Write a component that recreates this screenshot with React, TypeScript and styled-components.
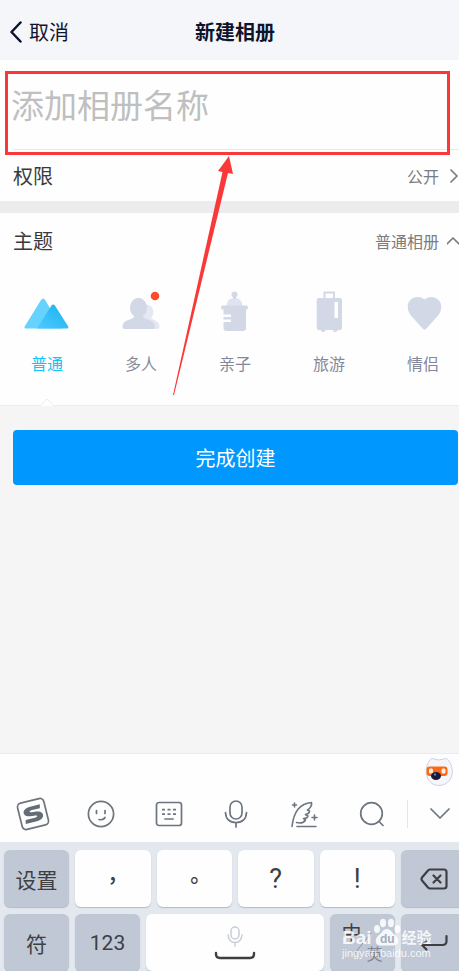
import React from "react";
import styled, { createGlobalStyle } from "styled-components";

const Global = createGlobalStyle`
  * { box-sizing: border-box; }
  body {
    margin: 0;
    background: #f5f5f5;
    font-family: "Noto Sans CJK SC", sans-serif;
  }
  button, input { font-family: inherit; }
`;

const Viewport = styled.div`
  min-height: 100vh;
  overflow: hidden;
  display: flex;
`;

const Screen = styled.div`
  position: relative;
  flex: none;
  width: calc(100% + 11px);
  min-height: 100vh;
  display: flex;
  flex-direction: column;
  background: #f5f5f5;
`;

const PlainButton = styled.button`
  border: 0;
  padding: 0;
  background: none;
  color: inherit;
  display: flex;
  align-items: center;
`;

const Header = styled.header`
  display: grid;
  grid-template-columns: 1fr auto 1fr;
  align-items: center;
  height: 60px;
  padding: 4px 10px 0;
  background: #f4f6fa;
  color: #10142a;
`;

const BackButton = styled(PlainButton)`
  gap: 7px;
  font-size: 20px;
  line-height: 28px;
`;

const Title = styled.h1`
  margin: 0;
  font-size: 20px;
  line-height: 28px;
  font-weight: 700;
`;

const Panel = styled.section`
  background: #fefefe;
`;

const NameField = styled.div`
  position: relative;
  height: 90px;
  padding: 20px 11px 0;
`;

const NameInput = styled.input`
  display: block;
  width: 100%;
  height: 48px;
  padding: 0;
  border: 0;
  outline: 0;
  background: transparent;
  font-size: 33px;
  color: #33363c;
  &::placeholder { color: #bfbfbf; opacity: 1; }
`;

const Rule = styled.hr`
  margin: 21px -11px 0 2px;
  border: 0;
  height: 1px;
  background: #e8e8e8;
`;

const Highlight = styled.div`
  position: absolute;
  inset: 11px 20px -5px 5px;
  border: 3px solid #fb3838;
  pointer-events: none;
`;

const Arrow = styled.svg`
  position: absolute;
  left: 172px;
  top: 155px;
  pointer-events: none;
`;

const SettingRow = styled(PlainButton)<{ $tall?: boolean }>`
  width: 100%;
  height: ${(p) => (p.$tall ? 55 : 51)}px;
  padding: 0 11px 0 13px;
  justify-content: space-between;
`;

const SettingLabel = styled.span`
  font-size: 20px;
  line-height: 28px;
  color: #3a3a3c;
`;

const SettingValue = styled.span`
  display: flex;
  align-items: center;
  gap: 8px;
  font-size: 16px;
  line-height: 24px;
  color: #7c7c7e;
`;

const Band = styled.div`
  height: 12px;
  background: #ebeceb;
`;

const Themes = styled.div`
  display: grid;
  grid-template-columns: repeat(5, 1fr);
  height: 138px;
  padding-top: 22px;
  border-bottom: 1px solid #ededed;
`;

const Theme = styled(PlainButton)<{ $active?: boolean }>`
  position: relative;
  flex-direction: column;
  gap: 15px;
  font-size: 16px;
  line-height: 24px;
  color: ${(p) => (p.$active ? "#14c3f8" : "#85889a")};
`;

const ThemePointer = styled.svg`
  position: absolute;
  bottom: -1px;
  left: 50%;
  margin-left: -8px;
`;

const Submit = styled.button`
  height: 55px;
  margin: 24px 12px 0 13px;
  border: 0;
  border-radius: 4px;
  background: #0098ff;
  color: #fff;
  font-size: 20px;
  line-height: 28px;
`;

const Keyboard = styled.section`
  position: relative;
  margin-top: auto;
`;

const InputTools = styled.div`
  height: 89px;
  background: #fefefe;
  border-top: 1px solid #ececec;
`;

const Mascot = styled(PlainButton)`
  margin: 2px 17px 0 auto;
`;

const ToolRow = styled.div`
  display: flex;
  align-items: center;
  justify-content: space-between;
  padding: 4px 8px 0 11px;
  color: #6d757e;
`;

const Tool = styled(PlainButton)<{ $divided?: boolean }>`
  position: relative;
  justify-content: center;
  width: 44px;
  height: 44px;
  ${(p) =>
    p.$divided &&
    `&::before {
      content: "";
      position: absolute;
      left: -11px;
      top: 8px;
      height: 28px;
      border-left: 1px solid #e4e5e8;
    }`}
`;

const Keys = styled.div`
  display: grid;
  gap: 7px;
  padding: 8px 4px 0;
  background: #e3e7ee;
`;

const KeyRow = styled.div<{ $columns: string }>`
  display: grid;
  grid-template-columns: ${(p) => p.$columns};
  gap: 6px;
`;

const Key = styled(PlainButton)<{ $dark?: boolean }>`
  justify-content: center;
  height: 57px;
  border-radius: 6px;
  background: ${(p) => (p.$dark ? "#c0c8d6" : "#fefefe")};
  box-shadow: 0 1px 1px #b3bac6;
  color: #3d3f42;
  font-size: 21px;
  line-height: 30px;
`;

const PunctuationKey = styled(Key)`
  font-family: "Noto Sans CJK TC", sans-serif;
  font-weight: 500;
`;

const LatinKey = styled(Key)<{ $large?: boolean }>`
  font-family: Roboto, sans-serif;
  font-size: ${(p) => (p.$large ? 27 : 21)}px;
`;

const Language = styled.span`
  display: grid;
  grid-template: 21px 21px / 20px 18px;
  column-gap: 4px;
  font-size: 20px;
  line-height: 21px;
  svg { grid-area: 1 / 1 / 3 / 3; place-self: center; }
  small { grid-area: 2 / 2; font-size: 16px; color: #7f8794; }
`;

const LanguageMain = styled.span`
  grid-area: 1 / 1;
`;

const Watermark = styled.div`
  position: absolute;
  left: 342px;
  bottom: 13px;
  color: rgba(255, 255, 255, 0.85);
  font-family: "Liberation Sans", "Noto Sans CJK SC", sans-serif;
  font-size: 11px;
  line-height: 10px;
  pointer-events: none;
`;

const Brand = styled.div`
  display: flex;
  align-items: flex-end;
  gap: 1px;
  font-size: 19px;
  line-height: 20px;
  font-weight: 700;
  svg { margin-bottom: 2px; }
`;

const BrandSuffix = styled.span`
  font-size: 15px;
`;

const stroke = {
  fill: "none",
  stroke: "currentColor",
  strokeLinecap: "round" as const,
  strokeLinejoin: "round" as const,
};

const BackIcon = () => (
  <svg width="12" height="22" viewBox="0 0 12 22" {...stroke} strokeWidth="2.5">
    <path d="M10.500 1.500 1.500 11l9 9.500" />
  </svg>
);

const MountainIcon = () => (
  <svg width="46" height="46" viewBox="0 0 46 46">
    <defs>
      <linearGradient id="peak" x1="0" y1="1" x2="1" y2="0">
        <stop offset="0" stopColor="#50c9fb" />
        <stop offset="1" stopColor="#16b2f2" />
      </linearGradient>
    </defs>
    <path d="M.7 36.500 17 10q2-3 4.200 0L38 38.500H1.500q-1.500 0-.8-2z" fill="#66d2fe" />
    <path d="M13 38.500 27.500 15.500q1.700-2 3.400 0l13.300 21q.8 2-1 2z" fill="url(#peak)" />
  </svg>
);

const PeopleIcon = () => (
  <svg width="46" height="46" viewBox="0 0 46 46">
    <ellipse cx="28.500" cy="22" rx="7" ry="7.500" fill="#e5e8f3" />
    <path d="M28 28h5c4 3 8.500 3 8.500 9q0 2-2 2H28z" fill="#e5e8f3" />
    <ellipse cx="20.500" cy="17.800" rx="8.500" ry="10" fill="#d2d8e6" />
    <path
      d="M16 25h9v2c2 3.500 12 2 12 10q0 2-2 2H6.500q-2 0-2-2c0-8 9.500-6.500 11.500-10z"
      fill="#d2d8e6"
    />
    <circle cx="37" cy="6" r="4.300" fill="#fb4b2d" />
  </svg>
);

const BottleIcon = () => (
  <svg width="46" height="46" viewBox="0 0 46 46">
    <path d="M14.500 17c0-6 3-9 8-9s8 3 8 9z" fill="#dfe4f0" />
    <circle cx="22.500" cy="4.500" r="3" fill="#d2d8e6" />
    <path d="M21 6h3v3h-3z" fill="#d2d8e6" />
    <path
      d="M10.500 15.500h24q1.500 0 1.500 2t-1.500 2H34V38q0 3-3 3H14.500q-3 0-3-3v-6H19v-2.500h-7.500V27H19v-2.500h-7.500v-5h-1q-1.500 0-1.500-2t1.500-2z"
      fill="#d2d8e6"
    />
  </svg>
);

const SuitcaseIcon = () => (
  <svg width="46" height="46" viewBox="0 0 46 46">
    <path d="M18.500 9V2.500h9.500V9" fill="none" stroke="#d2d8e6" strokeWidth="2" />
    <path
      d="M12.700 8h21.300q2 0 2 2v28q0 2-2 2h-2.500q0 2-2.300 2t-2.300-2h-7.500q0 2-2.300 2t-2.300-2h-2.100q-2 0-2-2V10q0-2 2-2z"
      fill="#d2d8e6"
    />
    <rect x="28.500" y="12" width="3.500" height="16" fill="#fefefe" />
  </svg>
);

const HeartIcon = () => (
  <svg width="46" height="46" viewBox="0 0 46 46">
    <path
      d="M24.500 9.500C31 4 41.300 8 41.300 17c0 4-1.800 7-4.300 9.800L26 39q-1.500 1.500-3 0L12 26.800C9.500 24 7.700 21 7.700 17c0-9 10.300-13 16.800-7.500z"
      fill="#d2d8e6"
    />
  </svg>
);

const SogouIcon = () => (
  <svg width="36" height="36" viewBox="0 0 36 36" {...stroke} strokeWidth="1.700">
    <g transform="rotate(-14 18 18)">
      <rect x="4.500" y="4.500" width="27" height="27" rx="4" />
      <path
        d="M27 10.200H17c-10 0-10 8.500-2 9.300l5 .5c2.500.3 2 2-1 2H9.500l-1 4H20c9.500 0 10-8.800 2-9.500l-5-.5c-2.500-.3-2-2 1-2h8z"
        fill="#646c75"
        stroke="none"
      />
    </g>
  </svg>
);

const FaceIcon = () => (
  <svg width="28" height="28" viewBox="0 0 28 28" {...stroke} strokeWidth="1.700">
    <circle cx="14" cy="14" r="12.600" />
    <path d="M9.500 10.500v3M18 10.500v3M12 19.500q4.500 1 6-2" />
  </svg>
);

const KeyboardIcon = () => (
  <svg width="28" height="28" viewBox="0 0 28 28" {...stroke} strokeWidth="1.700">
    <rect x="1.500" y="2.500" width="25" height="23" rx="2.500" />
    <path d="M10 19h8" />
    <path
      strokeLinecap="butt"
      d="M7 9.700h3M12.500 9.700h3M18 9.700h3M7 14.200h3M12.500 14.200h3M18 14.200h3"
    />
  </svg>
);

const MicIcon = () => (
  <svg width="24" height="28" viewBox="0 0 24 28" {...stroke} strokeWidth="1.700">
    <rect x="6" y="1" width="12" height="18" rx="6" />
    <path d="M1.500 12.500q.5 10 10.500 10t10.500-10M12 22.500V27" />
  </svg>
);

const QuillIcon = () => (
  <svg width="28" height="28" viewBox="0 0 28 28" {...stroke} strokeWidth="1.600">
    <path d="M2 26.500C3.500 13 9 3.500 21.500 2.500c.5 3-1 5.500-4 7.500l2 1c0 2-2 3-4 3.500l2.500 1.500c-.5 2-2.500 2.500-4.500 2.500l2 1.500c-1.500 2.500-5 3.500-9 2.500M7 26.500h19M2.500 5h4M4.500 3v4M22 17.500h5M24.500 15v5" />
  </svg>
);

const SearchIcon = () => (
  <svg width="26" height="26" viewBox="0 0 26 26" {...stroke} strokeWidth="1.700">
    <circle cx="12.500" cy="12.500" r="10.800" />
    <path d="m20 20.500 4 4" />
  </svg>
);

const Chevron = ({ w, h, d }: { w: number; h: number; d: string }) => (
  <svg width={w} height={h} viewBox={`0 0 ${w} ${h}`} {...stroke} strokeWidth="1.700">
    <path d={d} />
  </svg>
);

const MascotIcon = () => (
  <svg width="28" height="32" viewBox="0 0 28 32">
    <path
      d="M5 4q2-3 4-1 4 2 10 0 3-2 5 2c4 6 4 12 2 17q-4 7.500-12 7.500T2.500 22C0 15 1 9 5 4z"
      fill="#f4f6fb"
      stroke="#cdd3e2"
    />
    <rect x="1.500" y="10.500" width="21" height="9.500" rx="3" fill="#fa6a1e" />
    <rect x="4" y="12.500" width="4" height="5" rx="1.500" fill="#fff1dc" />
    <rect x="16.500" y="12.500" width="4" height="5" rx="1.500" fill="#fff1dc" />
    <ellipse cx="11" cy="20" rx="5" ry="4" fill="#191a38" />
    <circle cx="10" cy="18.500" r="1.200" fill="#7074a0" />
  </svg>
);

const BackspaceIcon = () => (
  <svg width="28" height="22" viewBox="0 0 28 22" {...stroke} strokeWidth="2.200">
    <path d="M10 1.500h14q2.500 0 2.500 2.500v14q0 2.500-2.500 2.500H10q-1 0-2-1l-6-7q-1-1.500 0-3l6-7q1-1 2-1zM13.500 7.500l7 7M20.500 7.500l-7 7" />
  </svg>
);

const ReturnIcon = () => (
  <svg width="28" height="18" viewBox="0 0 28 18" {...stroke} strokeWidth="2.200">
    <path d="M26.500 2v5q0 4-4 4H2M6.500 6.500 2 11l4.500 4.500" />
  </svg>
);

const SpaceIcon = () => (
  <svg width="42" height="34" viewBox="0 0 42 34" {...stroke}>
    <g stroke="#c8cdd6" strokeWidth="1.500">
      <rect x="17" y="1" width="8" height="12" rx="4" />
      <path d="M14 9q1 7.500 7 7.500T28 9M21 16.500V20" />
    </g>
    <path d="M2 27v1q0 4 4 4h30q4 0 4-4v-1" stroke="#3d3f42" strokeWidth="2.400" />
  </svg>
);

const SlashIcon = () => (
  <svg width="18" height="24" viewBox="0 0 18 24" {...stroke}>
    <path d="M1 22 17 2" stroke="#8d95a3" />
  </svg>
);

const PawIcon = () => (
  <svg width="28" height="28" viewBox="0 0 28 28" fill="currentColor">
    <ellipse cx="4" cy="11" rx="3" ry="4" />
    <ellipse cx="10" cy="5" rx="3" ry="4.200" />
    <ellipse cx="18" cy="5" rx="3" ry="4.200" />
    <ellipse cx="24.500" cy="11" rx="3" ry="4" />
    <path d="M14 11c4 0 5 4 8 6 5 4 4 10-1 10.500H7c-5-.5-6-6.500-1-10.500 3-2 4-6 8-6z" />
    <text x="7" y="25" fontSize="12" fontWeight="700" fill="#a3adbd">du</text>
  </svg>
);

const themes = [
  { name: "普通", Icon: MountainIcon },
  { name: "多人", Icon: PeopleIcon },
  { name: "亲子", Icon: BottleIcon },
  { name: "旅游", Icon: SuitcaseIcon },
  { name: "情侣", Icon: HeartIcon },
];

const tools = [
  { name: "搜狗", Icon: SogouIcon },
  { name: "表情", Icon: FaceIcon },
  { name: "键盘", Icon: KeyboardIcon },
  { name: "语音", Icon: MicIcon },
  { name: "写作", Icon: QuillIcon },
  { name: "搜索", Icon: SearchIcon },
];

export default function App() {
  return (
    <Viewport>
      <Global />
      <Screen>
        <Header>
          <BackButton type="button"><BackIcon />取消</BackButton>
          <Title>新建相册</Title>
        </Header>
        <Panel>
          <NameField>
            <NameInput aria-label="相册名称" placeholder="添加相册名称" />
            <Rule />
            <Highlight />
          </NameField>
          <SettingRow type="button">
            <SettingLabel>权限</SettingLabel>
            <SettingValue>公开<Chevron w={12} h={14} d="M4 1l6 6-6 6" /></SettingValue>
          </SettingRow>
          <Band />
          <SettingRow type="button" $tall>
            <SettingLabel>主题</SettingLabel>
            <SettingValue>普通相册<Chevron w={12} h={14} d="M0 10l6-6 6 6" /></SettingValue>
          </SettingRow>
          <Themes>
            {themes.map(({ name, Icon }, i) => (
              <Theme key={name} type="button" $active={i === 0}>
                <Icon />
                {name}
                {i === 0 && (
                  <ThemePointer width="16" height="8" viewBox="0 0 16 8">
                    <path d="M1 8l7-7 7 7" fill="#fefefe" stroke="#ededed" />
                  </ThemePointer>
                )}
              </Theme>
            ))}
          </Themes>
        </Panel>
        <Submit type="button">完成创建</Submit>

        <Keyboard>
          <InputTools>
            <Mascot type="button" aria-label="助手"><MascotIcon /></Mascot>
            <ToolRow>
              {tools.map(({ name, Icon }) => (
                <Tool key={name} type="button" aria-label={name}><Icon /></Tool>
              ))}
              <Tool type="button" aria-label="收起" $divided>
                <Chevron w={20} h={12} d="M1 1l9 9 9-9" />
              </Tool>
            </ToolRow>
          </InputTools>
          <Keys>
            <KeyRow $columns="65px repeat(4, 1fr) 65px">
              <Key type="button" $dark>设置</Key>
              <PunctuationKey type="button">，</PunctuationKey>
              <PunctuationKey type="button">。</PunctuationKey>
              <LatinKey type="button" $large>?</LatinKey>
              <LatinKey type="button" $large>!</LatinKey>
              <Key type="button" $dark aria-label="删除"><BackspaceIcon /></Key>
            </KeyRow>
            <KeyRow $columns="65px 65px 1fr 65px 65px">
              <Key type="button" $dark>符</Key>
              <LatinKey type="button" $dark>123</LatinKey>
              <Key type="button" aria-label="空格"><SpaceIcon /></Key>
              <Key type="button" $dark>
                <Language>
                  <LanguageMain>中</LanguageMain>
                  <SlashIcon />
                  <small>英</small>
                </Language>
              </Key>
              <Key type="button" $dark aria-label="换行"><ReturnIcon /></Key>
            </KeyRow>
          </Keys>
          <Watermark>
            <Brand><span>Bai</span><PawIcon /><BrandSuffix>经验</BrandSuffix></Brand>
            jingyan.baidu.com
          </Watermark>
        </Keyboard>

        <Arrow width="64" height="242" viewBox="0 0 64 242">
          <path d="M57 1 61 19 56 18 2 240 1 240 50.500 17 46 16z" fill="#fb3838" />
        </Arrow>
      </Screen>
    </Viewport>
  );
}
